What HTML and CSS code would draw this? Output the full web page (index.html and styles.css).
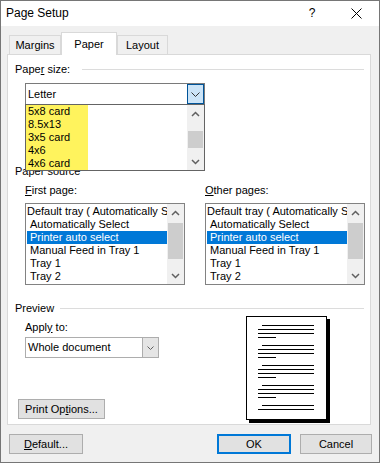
FILE: index.html
```html
<!DOCTYPE html>
<html lang="en">
  <head>
    <meta charset="utf-8">
    <title>Page Setup</title>
    <link rel="stylesheet" href="styles.css">
  </head>
  <body>
    <div class="window">
      <div class="titlebar">
        <span class="title">Page Setup</span>
        <span class="help">?</span>
        <span class="close"><svg width="11" height="11" viewBox="0 0 11 11"><path d="M0.5 0.5L10.5 10.5M10.5 0.5L0.5 10.5" stroke="#000" stroke-width="1" fill="none"/></svg></span>
      </div>

      <div class="tabs">
        <div class="tab margins">Margins</div>
        <div class="tab paper active">Paper</div>
        <div class="tab layout">Layout</div>
      </div>

      <div class="panel">
        <div class="group-head size-head"><span>Pape<u>r</u> size:</span><i></i></div>
        <div class="combo size-combo">
          <span class="value">Letter</span>
          <span class="arrow hot"><svg width="9" height="5" viewBox="0 0 9 5"><path d="M0.5 0.5L4.5 4.5L8.5 0.5" fill="none" stroke="#333"/></svg></span>
          <div class="dropdown">
            <div class="opts">
              <div class="hl">
                <div>5x8 card</div>
                <div>8.5x13</div>
                <div>3x5 card</div>
                <div>4x6</div>
                <div>4x6 card</div>
              </div>
            </div>
            <div class="scrollbar">
              <span class="sb-btn"><svg width="9" height="6" viewBox="0 0 9 6"><path d="M1 5L4.5 1.5L8 5" fill="none" stroke="#606060" stroke-width="1.5"/></svg></span>
              <span class="track"><span class="thumb drop-thumb"></span></span>
              <span class="sb-btn"><svg width="9" height="6" viewBox="0 0 9 6"><path d="M1 1L4.5 4.5L8 1" fill="none" stroke="#606060" stroke-width="1.5"/></svg></span>
            </div>
          </div>
        </div>

        <div class="group-head source-head"><span>Paper source</span></div>
        <div class="sources">
          <div class="source">
            <div class="label"><u>F</u>irst page:</div>
            <div class="listbox">
              <div class="items">
                <div class="item first">Default tray ( Automatically Select )</div>
                <div class="item">Automatically Select</div>
                <div class="item selected">Printer auto select</div>
                <div class="item">Manual Feed in Tray 1</div>
                <div class="item">Tray 1</div>
                <div class="item">Tray 2</div>
              </div>
              <div class="scrollbar">
                <span class="sb-btn"><svg width="9" height="6" viewBox="0 0 9 6"><path d="M1 5L4.5 1.5L8 5" fill="none" stroke="#606060" stroke-width="1.5"/></svg></span>
                <span class="track"><span class="thumb list-thumb"></span></span>
                <span class="sb-btn"><svg width="9" height="6" viewBox="0 0 9 6"><path d="M1 1L4.5 4.5L8 1" fill="none" stroke="#606060" stroke-width="1.5"/></svg></span>
              </div>
            </div>
          </div>
          <div class="source">
            <div class="label"><u>O</u>ther pages:</div>
            <div class="listbox">
              <div class="items">
                <div class="item first">Default tray ( Automatically Select )</div>
                <div class="item">Automatically Select</div>
                <div class="item selected">Printer auto select</div>
                <div class="item">Manual Feed in Tray 1</div>
                <div class="item">Tray 1</div>
                <div class="item">Tray 2</div>
              </div>
              <div class="scrollbar">
                <span class="sb-btn"><svg width="9" height="6" viewBox="0 0 9 6"><path d="M1 5L4.5 1.5L8 5" fill="none" stroke="#606060" stroke-width="1.5"/></svg></span>
                <span class="track"><span class="thumb list-thumb"></span></span>
                <span class="sb-btn"><svg width="9" height="6" viewBox="0 0 9 6"><path d="M1 1L4.5 4.5L8 1" fill="none" stroke="#606060" stroke-width="1.5"/></svg></span>
              </div>
            </div>
          </div>
        </div>

        <div class="group-head preview-head"><span>Preview</span><i></i></div>
        <div class="preview">
          <div class="apply">
            <div class="label">Appl<u>y</u> to:</div>
            <div class="combo doc-combo">
              <span class="value">Whole document</span>
              <span class="arrow"><svg width="7" height="4" viewBox="0 0 7 4"><path d="M0.5 0.5L3.5 3.5L6.5 0.5" fill="none" stroke="#606060"/></svg></span>
            </div>
            <button class="btn print-btn">Print Op<u>t</u>ions...</button>
          </div>
          <div class="page">
            <div class="para"><b class="l1"></b><b class="l"></b><b class="l"></b><b class="ls"></b></div>
            <div class="para"><b class="l1"></b><b class="l"></b><b class="l"></b><b class="ls"></b></div>
            <div class="para"><b class="l1"></b><b class="l"></b><b class="l"></b><b class="ls"></b></div>
            <div class="para"><b class="l1"></b><b class="l"></b><b class="l"></b><b class="ls"></b></div>
            <div class="para"><b class="l1"></b><b class="l"></b></div>
          </div>
        </div>
      </div>

      <div class="actions">
        <button class="btn"><u>D</u>efault...</button>
        <button class="btn ok">OK</button>
        <button class="btn cancel">Cancel</button>
      </div>
    </div>
  </body>
</html>
```

FILE: styles.css
```css
* {
  box-sizing: border-box;
}
body {
  margin: 0;
  font: 11px/13px "Liberation Sans", Arial, sans-serif;
  color: #000;
}
.window {
  display: flex;
  flex-direction: column;
  width: 380px;
  height: 463px;
  border: 1px solid #767676;
  background: #f0f0f0;
}
.titlebar {
  display: flex;
  align-items: center;
  height: 25px;
  background: #fff;
  font-size: 12px;
  .title {
    flex: 1;
    padding-left: 5px;
  }
  .help {
    width: 12px;
    margin-right: 33px;
    text-align: center;
  }
  .close {
    display: flex;
    width: 11px;
    margin-right: 17px;
  }
}
.tabs {
  position: relative;
  z-index: 1;
  display: flex;
  align-items: flex-end;
  height: 22px;
  margin: 6px 0 0 8px;
  .tab {
    height: 19px;
    border: 1px solid #d9d9d9;
    border-bottom: 0;
    background: #f0f0f0;
    line-height: 18px;
    text-align: center;
    &.margins { width: 52px; }
    &.paper { width: 56px; }
    &.layout { width: 51px; }
    &.active {
      height: 23px;
      margin-bottom: -1px;
      background: #fff;
      line-height: 22px;
    }
  }
}
.panel {
  position: relative;
  width: 364px;
  height: 371px;
  margin-left: 6px;
  padding: 0 6px 0 7px;
  border: 1px solid #d9d9d9;
  background: #fff;
}
.group-head {
  display: flex;
  align-items: center;
  height: 13px;
  & > i {
    flex: 1;
    height: 1px;
    background: #dcdcdc;
  }
  &.size-head {
    margin-top: 8px;
    & > span { width: 67px; }
  }
  &.source-head {
    margin-top: 60px;
  }
  &.preview-head {
    margin-top: 17px;
    & > span { width: 45px; }
  }
}
.combo {
  position: relative;
  display: flex;
  border: 1px solid #7a7a7a;
  background: #fff;
  .value {
    flex: 1;
    padding-left: 2px;
    white-space: nowrap;
  }
  .arrow {
    display: flex;
    align-items: center;
    justify-content: center;
  }
  &.size-combo {
    width: 180px;
    height: 22px;
    margin: 7px 0 0 10px;
    line-height: 20px;
    .arrow {
      width: 17px;
      border: 1px solid #005499;
      background: #cce4f7;
    }
  }
  &.doc-combo {
    width: 134px;
    height: 21px;
    margin: 3px 0 0 7px;
    border-color: #adadad;
    line-height: 19px;
    .arrow {
      width: 16px;
      border-left: 1px solid #adadad;
      background: #e5e5e5;
    }
  }
}
.dropdown {
  position: absolute;
  z-index: 5;
  top: 100%;
  left: -1px;
  display: flex;
  width: 180px;
  height: 67px;
  border: 1px solid #646464;
  background: #fff;
  line-height: 13px;
  .opts {
    flex: 1;
  }
  .hl {
    width: 62px;
    padding-left: 2px;
    background: #fff35d;
  }
}
.scrollbar {
  display: flex;
  flex-direction: column;
  width: 17px;
  background: #f0f0f0;
  .sb-btn {
    display: flex;
    align-items: center;
    justify-content: center;
    height: 17px;
  }
  .track {
    flex: 1;
  }
  .thumb {
    display: block;
    margin: 0 1px;
    background: #cdcdcd;
    &.drop-thumb {
      height: 17px;
      margin-top: 9px;
    }
    &.list-thumb {
      height: 36px;
      margin-top: 2px;
    }
  }
}
.sources {
  display: flex;
  gap: 20px;
  margin-left: 10px;
  .source {
    width: 160px;
  }
  .label {
    margin-top: 6px;
  }
}
.listbox {
  display: flex;
  height: 82px;
  margin-top: 6px;
  border: 1px solid #828282;
  .items {
    flex: 1;
    min-width: 0;
    padding: 1px 0 0 1px;
    overflow: hidden;
  }
  .item {
    padding-left: 3px;
    white-space: nowrap;
    &.first {
      padding-left: 0;
    }
    &.selected {
      background: #0078d7;
      color: #fff;
    }
  }
}
.preview {
  display: flex;
  height: 108px;
  margin-top: 1px;
  .apply {
    display: flex;
    flex-direction: column;
    width: 141px;
    margin-left: 3px;
    .label {
      margin: 5px 0 0 7px;
    }
  }
}
.btn {
  height: 20px;
  padding: 0;
  border: 1px solid #adadad;
  background: #e1e1e1;
  font: inherit;
  color: #000;
}
.print-btn {
  width: 87px;
  margin-top: auto;
  margin-bottom: 5px;
}
.page {
  display: flex;
  flex-direction: column;
  width: 81px;
  height: 104px;
  margin-left: 87px;
  padding-top: 8px;
  border: 1px solid #000;
  background: #fff;
  box-shadow: 3px 3px 0 #000;
  .para {
    display: flex;
    flex-direction: column;
    gap: 3px;
    margin-bottom: 7px;
  }
  b {
    display: block;
    height: 1px;
    background: #000;
    &.l1 { width: 52px; margin-left: 15px; }
    &.l { width: 56px; margin-left: 11px; }
    &.ls { width: 18px; margin-left: 11px; }
  }
}
.actions {
  display: flex;
  gap: 9px;
  margin-top: 9px;
  padding: 0 7px 0 8px;
  .btn {
    width: 74px;
  }
  .ok {
    margin-left: auto;
    border: 2px solid #0078d7;
  }
  .cancel {
    width: 72px;
  }
}
```
